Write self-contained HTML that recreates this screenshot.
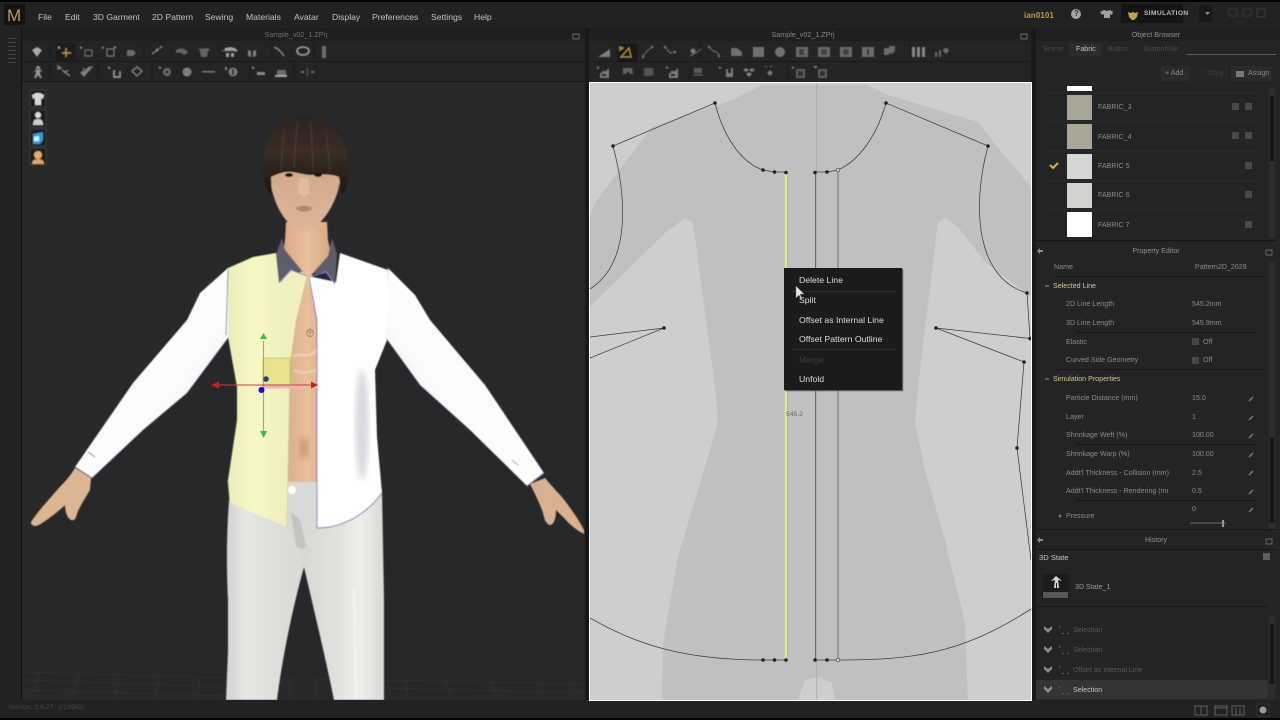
<!DOCTYPE html>
<html><head><meta charset="utf-8"><title>Marvelous Designer</title>
<style>
html,body{margin:0;padding:0;background:#000;}
#r{position:relative;width:1280px;height:720px;overflow:hidden;background:#212223;font-family:"Liberation Sans",sans-serif;}
.b{position:absolute;}
.t{position:absolute;white-space:nowrap;font-size:7.1px;line-height:12px;color:#8d8d8d;filter:blur(.2px);}
.m{font-size:8.6px;color:#c4c4c4;top:11px;}
.l{color:#8c8c8c;}
.y{color:#d8c986;}
.c{font-size:8.7px;color:#dedede;left:799px;}
.h{color:#8f8f8f;text-align:center;}
svg{position:absolute;left:0;top:0;}
</style></head><body><div id="r">
<div class="b" style="left:0;top:0;width:1280px;height:2px;background:#000"></div>
<div class="b" style="left:0;top:718px;width:1280px;height:2px;background:#000"></div>
<div class="b" style="left:0;top:2px;width:1280px;height:26px;background:#212223"></div>
<!-- viewport 3D -->
<div class="b" style="left:22px;top:82px;width:563px;height:618px;background:#27282a"></div>
<div class="b" style="left:0;top:28px;width:21px;height:672px;background:#212223;border-right:1px solid #111"></div>
<div class="b" style="left:22px;top:28px;width:563px;height:13px;background:#1e1f20"></div>
<div class="b" style="left:22px;top:41px;width:563px;height:41px;background:#232425"></div>
<div class="b" style="left:22px;top:61px;width:563px;height:1px;background:#1a1b1c"></div>
<div class="b" style="left:22px;top:81px;width:563px;height:1px;background:#18191a"></div>
<!-- 2D toolbars -->
<div class="b" style="left:585px;top:28px;width:4px;height:672px;background:#18191a"></div>
<div class="b" style="left:589px;top:28px;width:442px;height:13px;background:#1e1f20"></div>
<div class="b" style="left:589px;top:41px;width:442px;height:41px;background:#232425"></div>
<div class="b" style="left:589px;top:61px;width:442px;height:1px;background:#1a1b1c"></div>
<div class="b" style="left:1031px;top:28px;width:5px;height:672px;background:#18191a"></div>
<div class="b" style="left:1036px;top:28px;width:244px;height:672px;background:#232425"></div>
<div class="b" style="left:0;top:700px;width:1280px;height:18px;background:#212223"></div>

<div class="b" style="left:4px;top:4px;width:21px;height:21px;background:#141414"></div>
<div class="t" style="left:7px;top:7px;font-size:17px;line-height:17px;color:#c9983f;filter:none">M</div>
<span class="t m" style="left:38px">File</span><span class="t m" style="left:65px">Edit</span><span class="t m" style="left:93px">3D Garment</span><span class="t m" style="left:152px">2D Pattern</span><span class="t m" style="left:205px">Sewing</span><span class="t m" style="left:246px">Materials</span><span class="t m" style="left:294px">Avatar</span><span class="t m" style="left:332px">Display</span><span class="t m" style="left:372px">Preferences</span><span class="t m" style="left:431px">Settings</span><span class="t m" style="left:474px">Help</span>
<span class="t" style="left:1024px;top:10px;font-size:7.8px;color:#c69b3f;font-weight:bold;letter-spacing:.2px">ian0101</span>
<div class="b" style="left:1071px;top:9px;width:10px;height:10px;border-radius:50%;background:#a5a5a5"></div>
<span class="t" style="left:1074px;top:8px;font-size:8px;color:#333;font-weight:bold">?</span>
<div class="b" style="left:1121px;top:4px;width:62px;height:19px;background:#151515"></div>
<div class="b" style="left:1199px;top:5px;width:13px;height:17px;background:#1a1a1a"></div>
<span class="t" style="left:1144px;top:8px;font-size:6.6px;font-weight:bold;letter-spacing:.4px;color:#b9b9b9">SIMULATION</span>
<span class="t h" style="left:236px;top:29px;width:120px;font-size:7.2px;color:#6f6f6f">Sample_v02_1.ZPrj</span>
<span class="t h" style="left:743px;top:29px;width:120px;font-size:7.2px;color:#858585">Sample_v02_1.ZPrj</span>

<!-- toolbar icons + figure -->
<svg width="1280" height="720" viewBox="0 0 1280 720">
<defs>
<linearGradient id="tr" x1="0" x2="1" y1="0" y2="0"><stop offset="0" stop-color="#d2d3cf"/><stop offset=".12" stop-color="#e6e6e3"/><stop offset=".3" stop-color="#dfdfdc"/><stop offset=".5" stop-color="#d8d8d5"/><stop offset=".72" stop-color="#e2e2df"/><stop offset=".85" stop-color="#eeeeeb"/><stop offset="1" stop-color="#d8d8d5"/></linearGradient>
<linearGradient id="yl" x1="0" x2="1" y1="0" y2="0"><stop offset="0" stop-color="#ecedb8"/><stop offset=".35" stop-color="#f8f8c4"/><stop offset=".7" stop-color="#eff0bd"/><stop offset="1" stop-color="#f3f3bd"/></linearGradient>
<linearGradient id="sl" x1="0" x2="1" y1="0" y2="1"><stop offset="0" stop-color="#fff"/><stop offset=".6" stop-color="#fcfcfd"/><stop offset="1" stop-color="#dcdce3"/></linearGradient>
<linearGradient id="sr" x1="1" x2="0" y1="0" y2="1"><stop offset="0" stop-color="#fff"/><stop offset=".6" stop-color="#fcfcfd"/><stop offset="1" stop-color="#dcdce3"/></linearGradient>
<linearGradient id="sk" x1="0" x2="1" y1="0" y2="0"><stop offset="0" stop-color="#d9ab85"/><stop offset=".5" stop-color="#e8bf9a"/><stop offset="1" stop-color="#d8a982"/></linearGradient>
<linearGradient id="hr" x1="0" x2="0" y1="0" y2="1"><stop offset="0" stop-color="#2e241e"/><stop offset=".45" stop-color="#3b2e25"/><stop offset="1" stop-color="#1a1512"/></linearGradient>
<linearGradient id="fc" x1="0" x2="0" y1="0" y2="1"><stop offset="0" stop-color="#cfa688"/><stop offset="1" stop-color="#e0b698"/></linearGradient>
<filter id="bl"><feGaussianBlur stdDeviation=".5"/></filter>
<filter id="bl2"><feGaussianBlur stdDeviation="3"/></filter>
<clipPath id="vp"><rect x="22" y="82" width="563" height="618"/></clipPath>
<clipPath id="pp"><rect x="590" y="83" width="441" height="617"/></clipPath>
<pattern id="gd" width="10" height="10" patternUnits="userSpaceOnUse"><path d="M10 0H0V10" fill="none" stroke="#c8c8c8" stroke-width=".5"/></pattern>
</defs>

<!-- left toolbars -->
<g fill="#9a9a9a" stroke="none" filter="url(#bl)" opacity=".88">
<path d="M32 50l5-3 5 3-5 7z" fill="#bdbdbd"/>
<rect x="56" y="43" width="19" height="18" fill="#1a1a1a"/>
<path d="M66 48v9M62 53h9" stroke="#c9a23f" stroke-width="1.4" fill="none"/><path d="M58 46l3 2-3 1z" fill="#aaa"/>
<rect x="85" y="50" width="7" height="6" fill="none" stroke="#888"/><path d="M80 46l3 2-3 1z"/>
<rect x="107" y="49" width="7" height="7" fill="none" stroke="#9a9a9a"/><path d="M102 46l3 2-3 1zM113 47l3-1v3z"/>
<path d="M127 50h6l3 3-3 3h-6z" fill="#777"/>
<path d="M152 54l4-3M159 49l3-3" stroke="#999" stroke-width="1.4"/><circle cx="157" cy="50" r="1.5"/>
<path d="M176 50c4-3 10-2 12 3l-4 2c-2-2-4-3-8-2z" fill="#6d6d6d"/>
<path d="M198 49l10-1 2 2-2 1-1 6h-6l-1-6z" fill="#6d6d6d"/>
<path d="M225 48l5-1 5 1 3 3-3 1v-1h-10v1l-3-1zM226 53h3v4h-3zM231 53h3v4h-3z" fill="#b2b2b2"/>
<path d="M248 50l3 1v6l-3-1zM256 50l-3 1v6l3-1z" fill="#8f8f8f"/>
<path d="M274 47l4 2 3 3 3 4" stroke="#aaa" stroke-width="1.3" fill="none"/>
<ellipse cx="303" cy="51" rx="6" ry="4" fill="none" stroke="#aaa" stroke-width="1.8"/>
<rect x="322" y="46" width="4" height="12" fill="#777"/>
<path d="M38 66a2 2 0 1 0 .1 0zM33 72l4-3h3l3 3-3-1v3l2 4h-2l-2-3-2 3h-2l2-5v-2z" fill="#aaa"/>
<path d="M58 66l3 2-3 1zM62 70l8 6M68 70l-4 3" stroke="#8a8a8a" stroke-width="1.5"/>
<path d="M81 73l3 3 8-9-3 0-5 5-1-1zM83 68l4 4" stroke="#808080" stroke-width="1.3"/>
<path d="M108 66l3 2-3 1zM113 70h2v6h4v-5h2v7h-8z"/>
<path d="M132 71l5-4 5 4-5 5z" fill="none" stroke="#8c8c8c" stroke-width="1.5"/>
<path d="M159 66l3 2-3 1z"/><circle cx="167" cy="72" r="4" fill="#777"/><circle cx="167" cy="72" r="1.6" fill="#333"/>
<circle cx="187" cy="72" r="4.5" fill="#8a8a8a"/>
<rect x="202" y="71" width="13" height="1.5" fill="#888"/>
<circle cx="233" cy="72" r="4.5" fill="#8a8a8a"/><rect x="232" y="69" width="2" height="6" fill="#333"/><path d="M225 67h2v3h-2z"/>
<path d="M252 66l3 2-3 1zM257 72h8v3h-8z"/><path d="M277 70h9v5h-9z" fill="#777"/><path d="M275 75h12v2h-12z" fill="#bbb"/>
<path d="M301 72h3M311 72h3" stroke="#999" stroke-width="1.5"/><rect x="307" y="68" width="1" height="8" fill="#777"/>
</g>
<g stroke="#1a1b1c">
<path d="M50 43v16M144 43v16M224 43v16M272 43v16M314 43v16M50 63v16M98 63v16M152 63v16M250 63v16M294 63v16"/>
<path d="M616 43v16M700 43v16M910 43v16M690 63v16M788 63v16"/>
</g>
<!-- left mini stack -->
<g filter="url(#bl)">
<rect x="30" y="90" width="16" height="17" fill="#1a1a1a" stroke="#3a3a3a"/><path d="M32 95l4-2h4l4 2-1 4-2-1v7h-6v-7l-2 1z" fill="#d7d7d7"/>
<rect x="30" y="110" width="16" height="17" fill="#1a1a1a" stroke="#3a3a3a"/><circle cx="38" cy="115" r="3" fill="#ddd"/><path d="M33 125c0-5 2-6 5-6s5 1 5 6z" fill="#ccc"/>
<rect x="30" y="129" width="16" height="17" fill="#1a1a1a" stroke="#3a3a3a"/><path d="M33 134l10-2v8l-3 4h-7z" fill="#2d9be0"/><path d="M34 137l5-1v5h-5z" fill="#dff"/>
<rect x="30" y="148" width="16" height="17" fill="#1a1a1a" stroke="#3a3a3a"/><circle cx="38" cy="155" r="4" fill="#e6a86a"/><path d="M32 164c0-4 3-5 6-5s6 1 6 5z" fill="#e0a46c"/>
</g>
<g fill="#444"><rect x="8" y="38" width="8" height="1"/><rect x="8" y="42" width="8" height="1"/><rect x="8" y="46" width="8" height="1"/><rect x="8" y="50" width="8" height="1"/><rect x="8" y="54" width="8" height="1"/><rect x="8" y="58" width="8" height="1"/><rect x="8" y="62" width="8" height="1"/></g>

<!-- 2D toolbars -->
<g fill="#8c8c8c" filter="url(#bl)" opacity=".85">
<path d="M598 57l12-8v8z" fill="#8f8f8f"/>
<rect x="618" y="44" width="19" height="18" fill="#181818"/>
<path d="M621 57l8-9 2 9zM620 47l3 1-3 2z" fill="none" stroke="#c9a23f" stroke-width="1.2"/>
<path d="M642 57l4-5 6-5M665 47l5 6 5-1M690 56l6-3 5-4M709 47l4 4 4 1 2 4" stroke="#858585" fill="none"/>
<circle cx="643" cy="57" r="1.2"/><circle cx="652" cy="47" r="1.2"/><circle cx="665" cy="47" r="1.2"/><circle cx="675" cy="52" r="1.2"/><circle cx="693" cy="51" r="2.5"/><circle cx="709" cy="47" r="1.2"/><circle cx="719" cy="56" r="1.2"/>
<path d="M731 48h6l5 4v4h-11z" fill="#7e7e7e"/>
<rect x="753" y="47" width="11" height="10" fill="#7e7e7e"/>
<circle cx="780" cy="52" r="5" fill="#808080"/>
<rect x="796" y="47" width="12" height="10" fill="#787878"/><path d="M799 49h6l-2 3 3 3h-7z" fill="#444"/>
<rect x="818" y="47" width="12" height="10" fill="#787878"/><rect x="821" y="49" width="6" height="6" fill="#4a4a4a"/>
<rect x="840" y="47" width="12" height="10" fill="#787878"/><rect x="843" y="49" width="6" height="6" rx="2" fill="#4a4a4a"/>
<rect x="862" y="47" width="12" height="10" fill="#787878"/><rect x="867" y="49" width="2" height="6" fill="#333"/>
<path d="M884 48h5v7h-5zM889 46h6v5l-3 3-3-1z" fill="#777"/>
<path d="M912 47h3v10h-3zM917 47h3v10h-3zM922 47h3v10h-3z" fill="#9a9a9a"/>
<path d="M935 52h2v5h-2zM939 50h2v7h-2zM943 51c0-4 6-4 6 0l-3 3z" fill="#777"/>
<path d="M597 66l3 2-3 1zM602 71h5v-2h2v9h-9v-5h2v3h4v-2h-4z"/>
<path d="M623 68h9l1 6h-3l-2-3-2 3h-3z" fill="#6e6e6e"/>
<path d="M644 68h9l1 6-3 2h-7z" fill="#5d5d5d"/>
<path d="M666 66l3 2-3 1zM671 71h5v-2h2v9h-9v-5h2v3h4v-2h-4z"/>
<path d="M694 68h8v5h-8z" fill="#666"/><rect x="693" y="74" width="10" height="2" fill="#555"/>
<path d="M719 66l3 2-3 1zM726 69h2v4h3v-5h2v9h-7z"/>
<path d="M743 70l3-2 3 2-3 2zM749 70l3-2 3 2-3 2zM746 74l3-2 3 2-3 3z" fill="#919191"/>
<path d="M767 73l3-3 3 3-3 3z" fill="#888"/><path d="M765 66h2v1h-2zM770 66h2v1h-2z"/>
<path d="M792 66l3 2-3 1z"/><rect x="796" y="69" width="9" height="9" fill="#696969"/><rect x="798" y="71" width="5" height="5" fill="#333"/>
<rect x="818" y="69" width="9" height="9" fill="#696969"/><rect x="820" y="71" width="5" height="5" fill="#333"/><path d="M814 66h3v2h-3z"/>
</g>

<!-- 3D figure -->
<g clip-path="url(#vp)">
<g stroke="#343537" stroke-width=".6" fill="none">
<path d="M24 672L227 678M24 680L227 687M24 690L227 696M384 680L585 684M384 688L585 693M384 698L585 699M278 680L334 680M278 690L334 690"/>
<path d="M40 672L30 698M80 674L70 699M120 675L113 699M160 676L154 699M200 677L196 699M290 677L289 699M315 677L316 699M405 680L408 699M445 680L452 699M490 681L498 699M535 682L545 699M572 683L581 699"/>
</g>
<g filter="url(#bl)">
<!-- trousers -->
<path d="M229 500C227 530 226 560 228 600L228 650L226 700H277C282 660 292 610 304 567C314 610 326 660 334 700H384L384 600L382 490L288 480Z" fill="url(#tr)"/>
<path d="M288 482H318L318 528L300 556L288 528Z" fill="#d9d9d6"/>
<path d="M291 512L296 545C300 550 304 550 306 546L300 520Z" fill="#c3c3c0"/>
<path d="M354 590L356 700" stroke="#f5f5f3" stroke-width="3" opacity=".8"/>
<circle cx="292" cy="490" r="4" fill="#fff"/>
<!-- neck/chest -->
<path d="M286 222L285 240L283 254L300 272L296 310L290 345L288 482H318V320L312 274L331 254L328 240L327 222Z" fill="url(#sk)"/>
<path d="M293 356c8-4 14 4 24-6M294 370c8 4 14 3 23 0" stroke="#efd6c4" stroke-width="3" fill="none" opacity=".65"/>
<ellipse cx="304" cy="448" rx="5" ry="11" fill="#b78a65" opacity=".6" filter="url(#bl2)"/>
<!-- yellow -->
<path d="M228 268L253 257L276 253L279 281L292 270L307 275L296 320L290 363L287 527L230 503L228 480L237 420L237 387L228 337Z" fill="url(#yl)"/>
<path d="M287 527L290 363M230 503L228 480" stroke="#c8d78a" stroke-width=".8" fill="none"/>
<!-- white front -->
<path d="M308 276L336 282L340 253L388 270L388 320L387 340L375 370L377 437L382 493C370 510 345 528 317 528V320Z" fill="#fff"/>
<ellipse cx="362" cy="425" rx="7" ry="55" fill="#d9d9e2" filter="url(#bl2)"/>
<path d="M309 277L317 320V528C345 528 368 512 382 493" fill="none" stroke="#6e67b0" stroke-width=".9"/>
<path d="M388 270L388 332" fill="none" stroke="#8d88b8" stroke-width=".7"/>
<!-- sleeves -->
<path d="M228 268L200 293L187 320L133 383L75 467L92 478L143 430L187 393L228 338Z" fill="url(#sl)"/>
<path d="M388 268L415 295L430 320L485 385L544 473L527 486L470 430L420 385L386 338Z" fill="url(#sr)"/>
<path d="M75 467L92 478M544 473L527 486" stroke="#7770b8" stroke-width="1.2"/>
<path d="M228 270L226 335M88 452L95 457M512 460L518 465" stroke="#6e67b0" stroke-width=".8" fill="none"/>
<path d="M228 338L187 393L143 430L92 478M386 338L420 385L470 430L527 486" stroke="#6a6890" stroke-width=".7" fill="none" opacity=".6"/>
<!-- hands -->
<path d="M75 468C68 480 58 488 52 496C44 505 36 514 31 522C31 526 35 527 39 525C47 520 55 514 62 508L65 505C65 511 67 518 71 520C75 521 76 518 77 514C79 508 84 500 90 490L91 478Z" fill="#dcb592"/>
<path d="M530 484L545 478C553 488 562 496 568 505C574 513 580 522 584 530L584 534C578 531 571 526 564 518L556 510C556 516 555 523 551 525C547 525 545 521 544 517C542 508 537 498 530 484Z" fill="#d9b190"/>
<!-- collars -->
<path d="M282 238L276 254L279 283L291 270L303 272L285 250Z" fill="#5c5e69"/>
<path d="M332 238L337 254L335 284L326 272L312 274L328 256Z" fill="#5c5e69"/>
<path d="M279 283L291 270L307 276M335 284L326 272L309 277" stroke="#8c82d4" stroke-width="1.1" fill="none"/>
<!-- head -->
<path d="M270 172C270 200 285 228 304 232C322 228 340 200 341 172L320 155H290Z" fill="url(#fc)"/>
<path d="M263 170C262 135 280 117 305 117C332 117 349 138 348 170C349 182 346 190 342 195L339 177C330 173 318 175 312 175C302 175 295 171 286 172C280 173 275 175 271 177L272 195C266 190 263 180 263 170Z" fill="url(#hr)"/>
<path d="M284 130L281 170M297 122L294 168M311 122L313 170M326 130L330 172" stroke="#5a4739" stroke-width="1.4" opacity=".45" fill="none"/>
<ellipse cx="289" cy="175" rx="4" ry="2" fill="#1a1412"/><ellipse cx="318" cy="175" rx="4" ry="2" fill="#1a1412"/>
<path d="M299 178L298 193L304 197L310 193L308 178Z" fill="#e2bb9c"/>
<path d="M295 208C300 205 308 205 313 208C308 213 300 213 295 208Z" fill="#b98470"/>
</g>
<!-- gizmo -->
<rect x="263" y="358" width="27" height="27" fill="#e9e38c" stroke="#b7c06a" stroke-width=".7"/>
<rect x="262" y="385.5" width="55" height="3" fill="#e8b7bd"/>
<path d="M263.5 341V431" stroke="#5fd060" stroke-width="1.1"/>
<path d="M263.5 333l-3.5 6h7zM263.5 438l-3.5-7h7z" fill="#37c04a"/>
<path d="M218 385H311" stroke="#d63b3b" stroke-width="1"/>
<path d="M211 385l8-3.5v7zM318 385l-7-3.5v7z" fill="#d11d1d"/>
<circle cx="266" cy="379" r="2.8" fill="#2b3c8a"/><circle cx="261.5" cy="390" r="3" fill="#0a0ed0"/>
<path d="M306 332h8M310 328v9" stroke="#9d8571" stroke-width=".8"/><circle cx="310" cy="333" r="3.5" fill="none" stroke="#9d8571" stroke-width=".7"/>
</g>

<!-- 2D panel -->
<rect x="589" y="82" width="443" height="619" fill="#fff"/>
<g clip-path="url(#pp)">
<rect x="590" y="83" width="441" height="617" fill="#cecece"/>
<rect x="590" y="83" width="441" height="617" fill="url(#gd)" opacity=".65"/>
<path d="M590 215L595 203L612 180L652 127L732 100L762 85H868L885 94L978 122L1000 150L1031 187V297L985 262L958 227L946 218L938 222L918 387L915 423L925 470L945 540L965 623L968 700H835L832 683L818 677L805 680L798 700H662L663 643L678 557L698 490L718 423L715 387L693 223L685 218L665 233L590 307Z" fill="#c0c0c0"/>
<g fill="none" stroke="#3e3e3e" stroke-width=".75">
<path d="M613 146L715 103M715 103C723 135 740 162 763 170L774 172H786"/>
<path d="M613 146C626 195 632 262 590 289"/>
<path d="M664 328L590 337M664 328L590 358"/>
<path d="M886 103L988 146M886 103C877 135 860 160 838 170L827 172H815"/>
<path d="M988 146C972 205 975 278 1027 293L1030 338M936 328L1030 338.5M936 328L1024 362L1017 448L1031 560"/>
<path d="M590 618C640 647 690 660 763 660H786M838 660C910 660 960 655 1031 609M815 660H838"/>
</g>
<path d="M816.8 83V700" stroke="#a3a3a3" stroke-width=".7"/>
<path d="M815.5 172V660" stroke="#6a6a6a" stroke-width="1"/>
<path d="M838 172V660" stroke="#6e6a68" stroke-width=".9"/>
<path d="M786 173V660" stroke="#dfe98c" stroke-width="2.6"/>
<path d="M787.4 173V660" stroke="#9bb057" stroke-width=".5"/>
<g fill="#222">
<circle cx="715" cy="103" r="1.8"/><circle cx="613" cy="146" r="1.8"/><circle cx="763" cy="170" r="1.8"/><circle cx="774.5" cy="172" r="1.8"/><circle cx="786" cy="172.5" r="1.8"/><circle cx="815" cy="172.5" r="1.8"/><circle cx="827" cy="172" r="1.8"/><circle cx="886" cy="103" r="1.8"/><circle cx="988" cy="146" r="1.8"/><circle cx="664" cy="328" r="1.8"/><circle cx="936" cy="328" r="1.8"/><circle cx="1027" cy="293" r="1.8"/><circle cx="1030" cy="338.5" r="1.8"/><circle cx="1024" cy="362" r="1.8"/><circle cx="1017" cy="448" r="1.8"/><circle cx="763" cy="660" r="1.8"/><circle cx="774.5" cy="660" r="1.8"/><circle cx="786" cy="660" r="1.8"/><circle cx="815" cy="660" r="1.8"/><circle cx="827" cy="660" r="1.8"/>
</g>
<circle cx="838" cy="170" r="1.7" fill="#ddd" stroke="#444" stroke-width=".7"/><circle cx="838" cy="660" r="1.7" fill="#ddd" stroke="#444" stroke-width=".7"/>
</g>

<!-- panel header/arrows -->
<g fill="#8a8a8a">
<path d="M1037 35l3-3v2h3v2h-3v2z"/><path d="M1037 251l3-3v2h3v2h-3v2z"/><path d="M1037 540l3-3v2h3v2h-3v2z"/>
</g>
<g fill="none" stroke="#6d6d6d" stroke-width=".9">
<path d="M573 34h6v5h-6zM1266 34h6v5h-6zM1266 250h6v5h-6zM1266 539h6v5h-6zM1021 34h6v5h-6z"/>
</g>
<!-- top right window btns -->
<g stroke="#3a3a3a" fill="none"><rect x="1229" y="9" width="8" height="7"/><rect x="1243" y="9" width="8" height="7"/><rect x="1257" y="9" width="8" height="8"/></g>
<path d="M1128 12l3 1 2-1 2 1 3-1-1 5-3 3h-2l-3-3z" fill="#caa03c"/>
<path d="M1205 12h5l-2.5 3z" fill="#8b8b8b"/>
<path d="M1100 12l4-2 3 1 3-1 3 2-1 3-2-1v4h-6v-4l-2 1z" fill="#9f9f9f"/>
</svg>

<!-- right panel content -->
<div class="b" style="left:1036px;top:29px;width:244px;height:12px;background:#1f2021"></div>
<span class="t h" style="left:1096px;top:29px;width:120px;">Object Browser</span>
<div class="b" style="left:1069px;top:43px;width:33px;height:13px;background:#2b2c2d"></div>
<div class="b" style="left:1186px;top:54px;width:90px;height:1px;background:#5a5a5a"></div>
<span class="t" style="left:1043px;top:43px;color:#4b4b4b">Scene</span><span class="t" style="left:1076px;top:43px;color:#c0c0c0">Fabric</span><span class="t" style="left:1108px;top:43px;color:#4b4b4b">Button</span><span class="t" style="left:1144px;top:43px;color:#4b4b4b">Buttonhole</span>
<div class="b" style="left:1161px;top:66px;width:29px;height:15px;background:#2a2b2c"></div>
<div class="b" style="left:1199px;top:66px;width:29px;height:15px;background:#252627"></div>
<div class="b" style="left:1231px;top:66px;width:41px;height:15px;background:#2a2b2c"></div>
<span class="t" style="left:1165px;top:67px;color:#8a8a8a">+ Add</span><span class="t" style="left:1207px;top:67px;color:#3e3e3e">Copy</span><span class="t" style="left:1248px;top:67px;color:#8a8a8a">Assign</span>
<div class="b" style="left:1236px;top:71px;width:8px;height:6px;background:#777"></div>

<div class="b" style="left:1067px;top:86px;width:25px;height:5px;background:#fff"></div>
<div class="b" style="left:1067px;top:95px;width:25px;height:25px;background:#aaa695"></div>
<div class="b" style="left:1067px;top:124px;width:25px;height:25px;background:#aba796"></div>
<div class="b" style="left:1067px;top:154px;width:25px;height:25px;background:#d6d7d2"></div>
<div class="b" style="left:1067px;top:183px;width:25px;height:25px;background:#d1d2ce"></div>
<div class="b" style="left:1067px;top:212px;width:25px;height:25px;background:#fff"></div>
<span class="t l" style="left:1098px;top:101px">FABRIC_3</span><span class="t l" style="left:1098px;top:131px">FABRIC_4</span><span class="t l" style="left:1098px;top:160px">FABRIC 5</span><span class="t l" style="left:1098px;top:189px">FABRIC 6</span><span class="t l" style="left:1098px;top:219px">FABRIC 7</span>
<svg width="1280" height="720" viewBox="0 0 1280 720" style="pointer-events:none">
<path d="M1050 165l3 3 5-5" stroke="#e0b23c" stroke-width="2" fill="none"/>
<g fill="#4a4a4a"><rect x="1232" y="103" width="7" height="7"/><rect x="1245" y="103" width="7" height="7"/><rect x="1232" y="132" width="7" height="7"/><rect x="1245" y="132" width="7" height="7"/><rect x="1245" y="162" width="7" height="7"/><rect x="1245" y="191" width="7" height="7"/><rect x="1245" y="221" width="7" height="7"/></g>
<g stroke="#2b2c2d"><path d="M1048 93H1258M1048 122H1258M1048 151H1258M1048 181H1258M1048 210H1258"/></g>
<rect x="1269" y="88" width="6" height="150" fill="#2c2d2e"/><rect x="1270" y="96" width="4" height="65" fill="#141516"/>
<rect x="1269" y="262" width="6" height="268" fill="#2c2d2e"/><rect x="1270" y="438" width="4" height="85" fill="#141516"/>
<rect x="1269" y="616" width="6" height="84" fill="#2c2d2e"/><rect x="1270" y="624" width="4" height="60" fill="#161718"/>
<g stroke="#151617"><path d="M1036 240.5H1276M1036 529.5H1276M1036 549.5H1276M1055 276.5H1265M1055 369.5H1265M1075 332.5H1258M1075 444.5H1258M1075 500.5H1258M1036 606.5H1268"/></g>
<path d="M1045 286h4M1045 379h4" stroke="#999"/><path d="M1059 514l3 2-3 2z" fill="#777"/>
<g fill="#464747"><rect x="1192" y="338" width="7" height="7"/><rect x="1192" y="357" width="7" height="7"/></g>
<g stroke="#7a7a7a" stroke-width="1.5"><path d="M1249 401l4-4M1249 420l4-4M1249 438l4-4M1249 457l4-4M1249 475l4-4M1249 494l4-4M1249 512l4-4"/></g>
<path d="M1190 523H1226" stroke="#6d6d6d"/><rect x="1222" y="520" width="2" height="7" fill="#999"/>
<rect x="1036" y="680" width="232" height="19" fill="#333435"/>
<rect x="1042" y="574" width="27" height="25" fill="#1b1c1d"/>
<path d="M1056 576l-5 5 4-1 -1 8h2v-5h1v5h2l-1-8 4 1z" fill="#d6d6d0"/><rect x="1043" y="592" width="25" height="6" fill="#585858"/>
<g fill="#8a8a8a"><path d="M1044 626l4 3 4-3v3l-4 4-4-4z"/><path d="M1044 646l4 3 4-3v3l-4 4-4-4z"/><path d="M1044 666l4 3 4-3v3l-4 4-4-4z"/><path d="M1044 686l4 3 4-3v3l-4 4-4-4z"/></g>
<g fill="#5c5c5c"><rect x="1059" y="626" width="1" height="2"/><rect x="1062" y="633" width="2" height="1"/><rect x="1067" y="633" width="2" height="1"/><rect x="1059" y="646" width="1" height="2"/><rect x="1062" y="653" width="2" height="1"/><rect x="1067" y="653" width="2" height="1"/><rect x="1059" y="666" width="1" height="2"/><rect x="1062" y="673" width="2" height="1"/><rect x="1067" y="673" width="2" height="1"/><rect x="1059" y="686" width="1" height="2"/><rect x="1062" y="693" width="2" height="1"/><rect x="1067" y="693" width="2" height="1"/></g>
<g fill="none" stroke="#5f5f5f"><rect x="1195" y="706" width="12" height="9"/><path d="M1201 706v9"/><rect x="1215" y="706" width="12" height="9"/><path d="M1215 708h12"/><rect x="1232" y="706" width="12" height="9"/><path d="M1236 708v7M1240 708v7"/></g>
<circle cx="1263" cy="710" r="3.5" fill="#9a9a9a"/><rect x="1257" y="704" width="12" height="12" fill="none" stroke="#333"/>
<rect x="1263" y="553" width="7" height="7" fill="#5f5f5f"/>
</svg>
<span class="t h" style="left:1096px;top:245px;width:120px;">Property Editor</span>
<span class="t l" style="left:1054px;top:261px">Name</span><span class="t l" style="left:1195px;top:261px">Pattern2D_2629</span>
<span class="t y" style="left:1053px;top:280px">Selected Line</span>
<span class="t l" style="left:1066px;top:298px">2D Line Length</span><span class="t l" style="left:1192px;top:298px">545.2mm</span>
<span class="t l" style="left:1066px;top:317px">3D Line Length</span><span class="t l" style="left:1192px;top:317px">545.9mm</span>
<span class="t l" style="left:1066px;top:336px">Elastic</span><span class="t l" style="left:1203px;top:336px">Off</span>
<span class="t l" style="left:1066px;top:354px">Curved Side Geometry</span><span class="t l" style="left:1203px;top:354px">Off</span>
<span class="t y" style="left:1053px;top:373px">Simulation Properties</span>
<span class="t l" style="left:1066px;top:392px">Particle Distance (mm)</span><span class="t l" style="left:1192px;top:392px">15.0</span>
<span class="t l" style="left:1066px;top:411px">Layer</span><span class="t l" style="left:1192px;top:411px">1</span>
<span class="t l" style="left:1066px;top:429px">Shrinkage Weft (%)</span><span class="t l" style="left:1192px;top:429px">100.00</span>
<span class="t l" style="left:1066px;top:448px">Shrinkage Warp (%)</span><span class="t l" style="left:1192px;top:448px">100.00</span>
<span class="t l" style="left:1066px;top:467px">Addt'l Thickness - Collision (mm)</span><span class="t l" style="left:1192px;top:467px">2.5</span>
<span class="t l" style="left:1066px;top:485px;width:102px;overflow:hidden">Addt'l Thickness - Rendering (mm</span><span class="t l" style="left:1192px;top:485px">0.5</span>
<span class="t l" style="left:1066px;top:510px">Pressure</span><span class="t l" style="left:1192px;top:503px">0</span>
<span class="t h" style="left:1096px;top:534px;width:120px;">History</span>
<span class="t" style="left:1039px;top:552px;color:#c8c8c8;font-size:7.6px">3D State</span>
<span class="t" style="left:1075px;top:581px;color:#9b9b9b">3D State_1</span>
<span class="t" style="left:1073px;top:624px;color:#5a5a5a">Selection</span><span class="t" style="left:1073px;top:644px;color:#5a5a5a">Selection</span><span class="t" style="left:1073px;top:664px;color:#5a5a5a">Offset as Internal Line</span><span class="t" style="left:1073px;top:684px;color:#c4c4c4">Selection</span>
<span class="t" style="left:8px;top:702px;font-size:6.8px;color:#474747">Version: 2.6.27&nbsp;&nbsp;&nbsp;(r19563)</span>
<span class="t" style="left:786px;top:409px;font-size:6.8px;color:#666">545.2</span>

<!-- context menu -->
<div class="b" style="left:784px;top:268px;width:118px;height:122px;background:#1a1b1c;box-shadow:1px 1px 1px #444"></div>
<div class="b" style="left:792px;top:291px;width:104px;height:1px;background:#2c2d2e"></div>
<div class="b" style="left:792px;top:349px;width:104px;height:1px;background:#2c2d2e"></div>
<span class="t c" style="top:274px">Delete Line</span><span class="t c" style="top:294px">Split</span><span class="t c" style="top:314px">Offset as Internal Line</span><span class="t c" style="top:333px">Offset Pattern Outline</span><span class="t c" style="top:354px;color:#3f3f3f">Merge</span><span class="t c" style="top:373px">Unfold</span>
<svg width="1280" height="720" viewBox="0 0 1280 720" style="pointer-events:none"><path d="M796 286V298L799 295L801 299H802L800 294H804Z" fill="#e6e6e6" stroke="#777" stroke-width=".4"/></svg>
</div></body></html>
